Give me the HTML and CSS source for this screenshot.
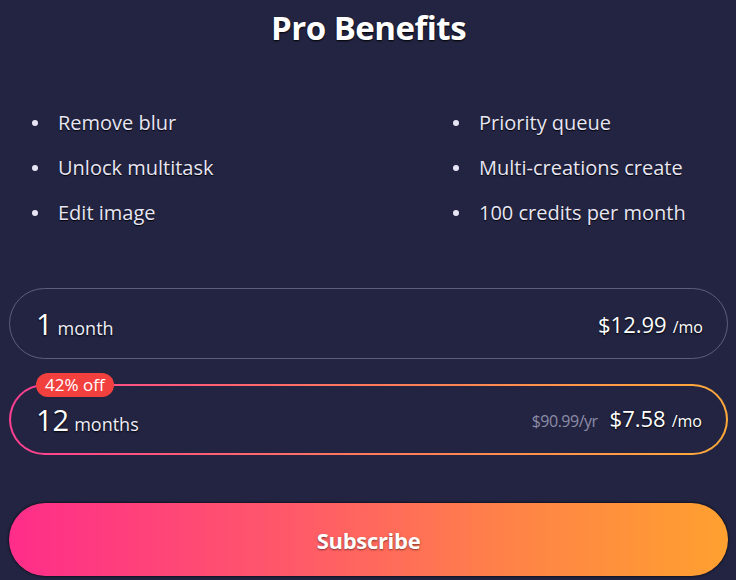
FILE: index.html
```html
<!DOCTYPE html>
<html lang="en">
<head>
<meta charset="utf-8">
<title>Pro Benefits</title>
<link rel="stylesheet" href="styles.css">
</head>
<body>
<main class="page">
  <h1 class="title">Pro Benefits</h1>
  <ul class="benefits">
    <li>Remove blur</li>
    <li>Priority queue</li>
    <li>Unlock multitask</li>
    <li>Multi-creations create</li>
    <li>Edit image</li>
    <li>100 credits per month</li>
  </ul>
  <div class="plans">
    <div class="plan">
      <div class="term"><span class="num">1</span> <span class="unit">month</span></div>
      <div class="price"><span class="amount">$12.99</span> <span class="per">/mo</span></div>
    </div>
    <div class="plan plan-active">
      <span class="badge">42% off</span>
      <div class="term"><span class="num">12</span> <span class="unit">months</span></div>
      <div class="price"><span class="total">$90.99/yr</span><span class="amount">$7.58</span> <span class="per">/mo</span></div>
    </div>
  </div>
  <button class="subscribe" type="button">Subscribe</button>
</main>
</body>
</html>
```
FILE: styles.css
```css
* { box-sizing: border-box; }
html, body { margin: 0; padding: 0; }
body {
  background: #232442;
  color: #ffffff;
  font-family: "Open Sans", "Noto Sans", sans-serif;
  width: 736px;
  height: 580px;
  overflow: hidden;
}
.page {
  display: flex;
  flex-direction: column;
  padding: 0 8px 0 9px;
}
.title {
  margin: 0;
  padding-top: 6px;
  height: 56px;
  text-align: center;
  font-size: 33px;
  line-height: 44px;
  font-weight: 700;
  letter-spacing: -0.5px;
  text-shadow: 0 1px 2px #000;
}
.benefits {
  list-style: none;
  margin: 52px 0 0 -9px;
  padding: 0;
  display: grid;
  grid-template-columns: 421px 1fr;
  row-gap: 15px;
  color: #e8e6f5;
  font-size: 20px;
  line-height: 30px;
  text-shadow: 0 1px 1px #000;
}
.benefits li {
  display: flex;
  align-items: center;
}
.benefits li::before {
  content: "";
  width: 6px;
  height: 6px;
  border-radius: 50%;
  background: #e8e6f5;
  margin-left: 32px;
  margin-right: 20px;
  flex: none;
}
.plans {
  margin-top: 60px;
  display: flex;
  flex-direction: column;
  gap: 25px;
}
.plan {
  position: relative;
  height: 71px;
  border-radius: 36px;
  border: 1px solid #5d5e7a;
  display: flex;
  align-items: center;
  justify-content: space-between;
  padding: 0 24px 0 26px;
  text-shadow: 0 1px 2px #000;
}
.plan-active {
  border: 2px solid transparent;
  background:
    linear-gradient(#232442, #232442) padding-box,
    linear-gradient(90deg, #ff3f93 0%, #ff7a5c 50%, #ffab3a 100%) border-box;
  padding: 0 24px 0 25px;
}
.term { display: flex; align-items: baseline; gap: 5px; }
.num { font-size: 29px; line-height: 1; }
.unit { font-size: 18px; line-height: 1; color: #eeeef8; }
.price { display: flex; align-items: baseline; gap: 6px; }
.amount { font-size: 22px; line-height: 1; }
.per { font-size: 16px; line-height: 1; }
.total {
  font-size: 16px;
  color: #8c8ca6;
  margin-right: 6px;
  letter-spacing: -0.5px;
  text-shadow: none;
}
.badge {
  position: absolute;
  left: 25px;
  top: -13px;
  height: 24px;
  padding: 0 9px;
  border-radius: 12px;
  background: #f2403f;
  color: #fff;
  font-size: 17px;
  line-height: 24px;
  text-shadow: none;
}
.subscribe {
  margin-top: 48px;
  height: 73px;
  border: none;
  border-radius: 37px;
  background: linear-gradient(90deg, #ff2d8a 0%, #ff5a68 40%, #ff8347 70%, #ffa02f 100%);
  color: #fff;
  font-family: inherit;
  font-size: 22px;
  font-weight: 700;
  letter-spacing: -0.3px;
  text-shadow: 0 1px 2px rgba(0,0,0,0.5);
  box-shadow: 0 0 3px #000;
  cursor: pointer;
}
```
